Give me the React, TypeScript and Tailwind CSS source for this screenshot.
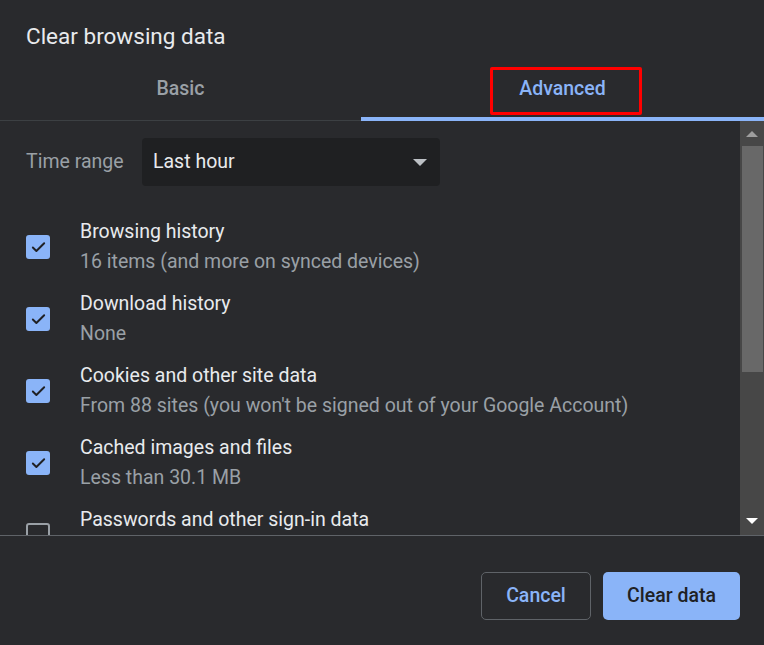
import { Check } from 'lucide-react'

type Item = {
  title: string
  sub?: string
  checked: boolean
}

const ITEMS: Item[] = [
  { title: 'Browsing history', sub: '16 items (and more on synced devices)', checked: true },
  { title: 'Download history', sub: 'None', checked: true },
  { title: 'Cookies and other site data', sub: "From 88 sites (you won't be signed out of your Google Account)", checked: true },
  { title: 'Cached images and files', sub: 'Less than 30.1 MB', checked: true },
  { title: 'Passwords and other sign-in data', sub: '', checked: false },
]

function Checkbox({ checked }: { checked: boolean }) {
  if (!checked) {
    return <div className="w-[24px] h-[24px] shrink-0 rounded-[3px] border-2 border-[#9aa0a6]" />
  }
  return (
    <div className="w-[24px] h-[24px] shrink-0 rounded-[3px] bg-[#8ab4f8] flex items-center justify-center">
      <Check className="w-[17px] h-[17px] text-[#202124]" strokeWidth={2.75} />
    </div>
  )
}

function ScrollBar() {
  return (
    <div className="w-[24px] shrink-0 bg-[#474747] flex flex-col items-center">
      <div className="h-[25px] flex items-center justify-center">
        <div className="w-0 h-0 border-l-[6px] border-r-[6px] border-b-[6px] border-l-transparent border-r-transparent border-b-[#9e9e9e]" />
      </div>
      <div className="w-[21px] h-[226px] bg-[#686868]" />
      <div className="flex-1" />
      <div className="h-[28px] flex items-center justify-center">
        <div className="w-0 h-0 border-l-[6px] border-r-[6px] border-t-[6px] border-l-transparent border-r-transparent border-t-white" />
      </div>
    </div>
  )
}

export default function App() {
  return (
    <div className="w-[764px] h-[645px] bg-[#292a2d] flex flex-col overflow-hidden font-['Roboto','Liberation_Sans',sans-serif]">
      {/* header */}
      <div className="pt-[20px] px-[26px] h-[60px]">
        <h1 className="text-[22.5px] leading-[32px] text-[#e8eaed]">Clear browsing data</h1>
      </div>

      {/* tabs */}
      <div className="flex h-[61px]">
        <div className="w-[361px] border-b border-[#3c4043] flex items-center justify-center pb-[3px]">
          <span className="text-[19.5px] font-medium text-[#9aa0a6]">Basic</span>
        </div>
        <div className="relative flex-1 border-b-[4px] border-[#8ab4f8] flex items-center justify-center">
          <span className="text-[19.5px] font-medium text-[#8ab4f8]">Advanced</span>
          <div className="absolute left-[129px] top-[7px] w-[152px] h-[48px] border-[3px] border-[#ff0000] rounded-[2px]" />
        </div>
      </div>

      {/* content */}
      <div className="flex h-[414px]">
        <div className="flex-1 overflow-hidden px-[26px]">
          <div className="flex items-center mt-[17px] h-[48px]">
            <span className="w-[116px] text-[19.5px] text-[#9aa0a6]">Time range</span>
            <div className="w-[298px] h-[48px] rounded-[4px] bg-[#1f2022] flex items-center justify-between pl-[11px] pr-[13px]">
              <span className="text-[19.5px] text-[#e8eaed]">Last hour</span>
              <div className="w-0 h-0 border-l-[7px] border-r-[7px] border-t-[7px] border-l-transparent border-r-transparent border-t-[#bdc1c6]" />
            </div>
          </div>

          <div className="mt-[25px] flex flex-col">
            {ITEMS.map((item) => (
              <div key={item.title} className="flex items-center gap-[30px] h-[72px] shrink-0">
                <Checkbox checked={item.checked} />
                <div className="flex flex-col">
                  <span className="text-[19.5px] leading-[30px] text-[#e8eaed]">{item.title}</span>
                  <span className="text-[19.5px] leading-[30px] text-[#9aa0a6] whitespace-nowrap">{item.sub || '\u00a0'}</span>
                </div>
              </div>
            ))}
          </div>
        </div>
        <ScrollBar />
      </div>

      {/* footer */}
      <div className="flex-1 border-t border-[#5f6368] flex items-start justify-end gap-[12px] pt-[36px] pr-[24px]">
        <button className="w-[110px] h-[48px] rounded-[5px] border border-[#5f6368] text-[19.5px] font-medium text-[#8ab4f8]">
          Cancel
        </button>
        <button className="w-[137px] h-[48px] rounded-[5px] bg-[#8ab4f8] text-[19.5px] font-medium text-[#202124]">
          Clear data
        </button>
      </div>
    </div>
  )
}
